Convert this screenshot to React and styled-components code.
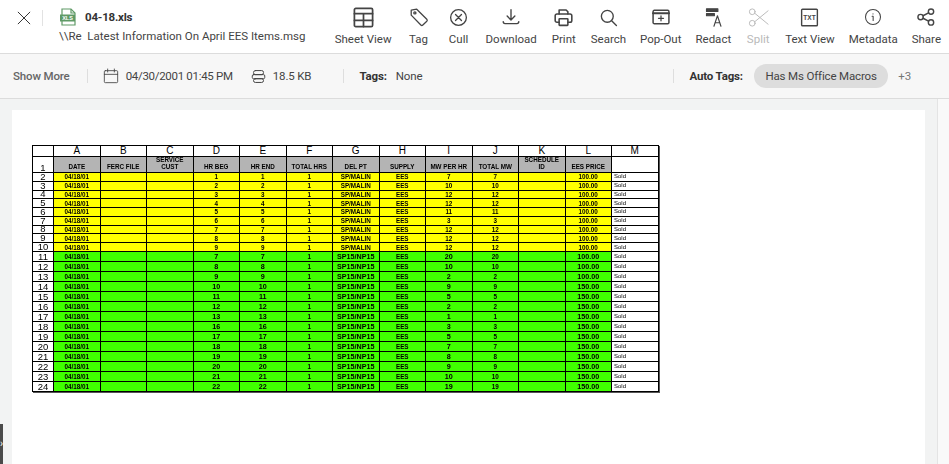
import React from 'react';
import styled, { createGlobalStyle } from 'styled-components';

const GlobalStyle = createGlobalStyle`
  html, body { margin: 0; padding: 0; height: 100%; overflow: hidden; }
  body { font-family: Roboto, "Liberation Sans", sans-serif; color: #333; background: #fff; }
`;

const LETTERS = ['A', 'B', 'C', 'D', 'E', 'F', 'G', 'H', 'I', 'J', 'K', 'L', 'M'];
const HEADINGS = ['DATE', 'FERC FILE', 'SERVICE CUST', 'HR BEG', 'HR END', 'TOTAL HRS', 'DEL PT', 'SUPPLY', 'MW PER HR', 'TOTAL MW', 'SCHEDULE ID', 'EES PRICE', ''];

const yellowMw = [7, 10, 12, 12, 11, 3, 12, 12, 12];
const greenHours = [7, 8, 9, 10, 11, 12, 13, 16, 17, 18, 19, 20, 21, 22];
const greenMw = [20, 10, 2, 9, 5, 2, 1, 3, 5, 7, 8, 9, 10, 19];

const rows = [
  ...yellowMw.map((mw, i) => ({ fill: 'yellow', hour: i + 1, point: 'SP/MALIN', mw, price: '100.00' })),
  ...greenMw.map((mw, i) => ({ fill: 'green', hour: greenHours[i], point: 'SP15/NP15', mw, price: i < 3 ? '100.00' : '150.00' })),
];

const Icon = styled.svg.attrs({ viewBox: '0 0 24 24', fill: 'none', stroke: 'currentColor' })`
  width: ${(p) => p.$size || 24}px;
  height: ${(p) => p.$size || 24}px;
  stroke-width: ${(p) => p.$weight || 1.5};
  stroke-linecap: round;
  stroke-linejoin: round;
  display: block;
`;

const TxtText = styled.text`
  font-family: "Liberation Sans", sans-serif;
  font-size: 7.5px;
  font-weight: 700;
  fill: currentColor;
  stroke: none;
`;

const tools = [
  { label: 'Sheet View', icon: (
    <Icon $size={23} $weight={1.8}><rect x="2.5" y="2.5" width="19" height="19" rx="1.5" /><path d="M2.5 8h19M2.5 15h19M12 8v13.5" /></Icon>
  ) },
  { label: 'Tag', icon: (
    <Icon $size={22} $weight={1.4}><path d="M3.5 4.5 9.5 3.5 20.5 14.5a1.6 1.6 0 0 1 0 2.2l-4.3 4.1a1.6 1.6 0 0 1-2.2 0L3.5 10z" /><circle cx="7.5" cy="7.5" r="1.2" /></Icon>
  ) },
  { label: 'Cull', icon: (
    <Icon $size={21} $weight={1.5}><circle cx="12" cy="12" r="9" /><path d="m8.6 8.6 6.8 6.8M15.4 8.6l-6.8 6.8" /></Icon>
  ) },
  { label: 'Download', icon: (
    <Icon $size={22} $weight={1.5}><path d="M12 4v11M7.8 11l4.2 4.2 4.2-4.2M3.5 17c0 1.6.8 2.2 2 2.2h13c1.2 0 2-.6 2-2.2" /></Icon>
  ) },
  { label: 'Print', icon: (
    <Icon $size={21} $weight={1.8}><path d="M7 8V3.5h8l2 2V8" /><path d="M7 17.5H4.5A2 2 0 0 1 2.5 15.5V10a2 2 0 0 1 2-2h15a2 2 0 0 1 2 2v5.5a2 2 0 0 1-2 2H17" /><rect x="7" y="13.5" width="10" height="7.5" rx=".6" /></Icon>
  ) },
  { label: 'Search', icon: (
    <Icon $size={19} $weight={1.7}><circle cx="10.5" cy="10.5" r="7.5" /><path d="m16 16 6 6" /></Icon>
  ) },
  { label: 'Pop-Out', icon: (
    <Icon $size={20}><rect x="2.5" y="4" width="19" height="16" rx="1.5" strokeWidth="1.8" /><path d="M2.5 7.5h19" strokeWidth="2.6" /><path d="M12 10.5v6M9 13.5h6" /></Icon>
  ) },
  { label: 'Redact', icon: (
    <Icon $size={21} $weight={1.3}>
      <path d="M4 2h13v3H4zM4 7.5h9V10H4z" fill="currentColor" />
      <path d="M12.5 22 16.5 10 20.5 22M13.8 18h5.400" />
    </Icon>
  ) },
  { label: 'Split', disabled: true, icon: (
    <Icon $size={23} $weight={1}><circle cx="5.5" cy="6" r="3" /><circle cx="5.5" cy="18" r="3" /><path d="M8 7.5 22 19M8 16.5 22 5" /></Icon>
  ) },
  { label: 'Text View', icon: (
    <Icon $size={21}>
      <rect x="3" y="2.5" width="18" height="19" rx="1" strokeWidth="1.6" />
      <TxtText x="12" y="15" textAnchor="middle">TXT</TxtText>
    </Icon>
  ) },
  { label: 'Metadata', icon: (
    <Icon $size={18} $weight={1.4}><circle cx="12" cy="12" r="10" /><path d="M10.8 11h1.4v5.5M12 7.6v.4" /></Icon>
  ) },
  { label: 'Share', icon: (
    <Icon $size={20} $weight={1.7}><circle cx="18" cy="5.5" r="3.2" /><circle cx="5.5" cy="12" r="3.2" /><circle cx="18" cy="18.5" r="3.2" /><path d="m8.4 10.5 6.7-3.5M8.4 13.5l6.7 3.5" /></Icon>
  ) },
];

const App = () => (
  <Page>
    <GlobalStyle />
    <TopBar>
      <CloseButton aria-label="Close">
        <Icon $size={14} $weight={1.7}><path d="M2 2 22 22M22 2 2 22" /></Icon>
      </CloseButton>
      <TopDivider />
      <FileInfo>
        <FileTitle>
          <XlsIcon viewBox="0 0 18 18" aria-hidden="true">
            <path d="M3 1h9l4 4v12H3z" fill="none" stroke="#5f9a66" strokeWidth="1.2" />
            <path d="M12 1v4h4" fill="none" stroke="#5f9a66" strokeWidth="1.2" />
            <rect x="1" y="6.5" width="15" height="7" fill="#5f9a66" />
            <XlsText x="8.5" y="12.2" textAnchor="middle">XLS</XlsText>
          </XlsIcon>
          <FileName>04-18.xls</FileName>
        </FileTitle>
        <FilePath>{'\\\\Re\u00a0\u00a0Latest Information On April EES Items.msg'}</FilePath>
      </FileInfo>
      <Toolbar>
        {tools.map((tool) => (
          <Tool key={tool.label} $disabled={tool.disabled}>
            <ToolIcon>{tool.icon}</ToolIcon>
            <span>{tool.label}</span>
          </Tool>
        ))}
      </Toolbar>
    </TopBar>

    <InfoBar>
      <ShowMore>Show More</ShowMore>
      <InfoDivider />
      <InfoItem $tight>
        <Icon $size={16} $weight={1.3}><rect x="2" y="4" width="20" height="18" rx="1.5" /><path d="M2 9.5h20M7 1.5v4.5M17 1.5v4.5" /></Icon>
        04/30/2001 01:45 PM
      </InfoItem>
      <InfoItem $gapLeft={18}>
        <Icon $size={15} $weight={1.6}><rect x="4" y="2.5" width="16" height="6.5" rx="3" /><rect x="2" y="9" width="20" height="6.5" rx="2" /><rect x="4" y="15.5" width="16" height="6" rx="3" /></Icon>
        18.5 KB
      </InfoItem>
      <InfoDivider $left={32} />
      <TagGroup>
        <Strong>Tags:</Strong>
        None
      </TagGroup>
      <AutoTags>
        <InfoDivider />
        <Strong>Auto Tags:</Strong>
        <Chip>Has Ms Office Macros</Chip>
        <More>+3</More>
      </AutoTags>
    </InfoBar>

    <Viewer>
      <Stage>
        <Document>
          <Sheet>
            <Corner />
            {LETTERS.map((letter) => <Letter key={letter}>{letter}</Letter>)}
            <RowNumber>1</RowNumber>
            {HEADINGS.map((heading, i) => (
              <Heading key={i} $blank={!heading}>{heading}</Heading>
            ))}
            {rows.map((row, i) => (
              <React.Fragment key={i}>
                <RowNumber>{i + 2}</RowNumber>
                <Cell $fill={row.fill}>04/18/01</Cell>
                <Cell $fill={row.fill} />
                <Cell $fill={row.fill} />
                <Cell $fill={row.fill} $big={row.fill === 'green'}>{row.hour}</Cell>
                <Cell $fill={row.fill} $big={row.fill === 'green'}>{row.hour}</Cell>
                <Cell $fill={row.fill}>1</Cell>
                <Cell $fill={row.fill} $big={row.fill === 'green'}>{row.point}</Cell>
                <Cell $fill={row.fill}>EES</Cell>
                <Cell $fill={row.fill} $big={row.fill === 'green'}>{row.mw}</Cell>
                <Cell $fill={row.fill}>{row.mw}</Cell>
                <Cell $fill={row.fill} />
                <Cell $fill={row.fill} $big={row.fill === 'green'}>{row.price}</Cell>
                <SoldCell>Sold</SoldCell>
              </React.Fragment>
            ))}
          </Sheet>
        </Document>
      </Stage>
      <Rail />
      <SideTab>›</SideTab>
    </Viewer>
  </Page>
);

const Page = styled.div`
  height: 100vh;
  display: flex;
  flex-direction: column;
  overflow: hidden;
`;

const TopBar = styled.header`
  height: 54px;
  box-sizing: border-box;
  flex: none;
  display: flex;
  align-items: flex-start;
  background: #fff;
  border-bottom: 1px solid #dcdcdc;
`;

const CloseButton = styled.button`
  margin: 11px 0 0 17px;
  padding: 0;
  border: 0;
  background: none;
  color: #333;
  display: flex;
`;

const TopDivider = styled.div`
  width: 1px;
  height: 16px;
  margin: 10px 0 0 11px;
  background: #e2e2e2;
`;

const FileInfo = styled.div`
  width: 262px;
  margin: 8px 0 0 16px;
  flex: none;
`;

const FileTitle = styled.div`
  display: flex;
  align-items: center;
  gap: 8px;
  height: 18px;
`;

const XlsIcon = styled.svg`
  width: 18px;
  height: 18px;
  flex: none;
`;

const XlsText = styled.text`
  font-family: "Liberation Sans", sans-serif;
  font-size: 5.5px;
  font-weight: 700;
  fill: #fff;
`;

const FileName = styled.span`
  font-size: 11.5px;
  font-weight: 700;
  letter-spacing: -0.2px;
  color: #333;
`;

const FilePath = styled.div`
  margin-top: 2px;
  font-size: 11.5px;
  line-height: 16px;
  color: #444;
  white-space: nowrap;
`;

const Toolbar = styled.nav`
  margin-left: auto;
  padding: 4px 8px 0 0;
  display: flex;
  gap: 14px;
`;

const Tool = styled.div`
  min-width: 26px;
  display: flex;
  flex-direction: column;
  align-items: center;
  font-size: 11.5px;
  line-height: 16px;
  white-space: nowrap;
  color: ${(p) => (p.$disabled ? '#b9b9b9' : '#444')};
`;

const ToolIcon = styled.div`
  height: 26px;
  margin-bottom: 1px;
  display: flex;
  align-items: center;
  justify-content: center;
`;

const InfoBar = styled.section`
  height: 45px;
  box-sizing: border-box;
  flex: none;
  display: flex;
  align-items: center;
  padding-left: 13px;
  background: #f7f7f7;
  border-bottom: 1px solid #dcdcdc;
  font-size: 11.5px;
  letter-spacing: -0.15px;
  color: #444;
`;

const ShowMore = styled.span`
  font-weight: 500;
  color: #666;
`;

const InfoDivider = styled.div`
  width: 1px;
  height: 14px;
  margin: 0 15px 0 ${(p) => p.$left || 17}px;
  background: #dedede;
`;

const InfoItem = styled.div`
  display: flex;
  align-items: center;
  gap: 7px;
  margin-left: ${(p) => p.$gapLeft || 0}px;
  letter-spacing: ${(p) => (p.$tight ? '-0.3px' : 'inherit')};
  white-space: nowrap;
`;

const TagGroup = styled.div`
  display: flex;
  gap: 9px;
`;

const Strong = styled.strong`
  font-weight: 700;
  color: #333;
`;

const AutoTags = styled.div`
  margin-left: auto;
  display: flex;
  align-items: center;
  padding-right: 38px;
`;

const Chip = styled.div`
  height: 24px;
  margin-left: 11px;
  padding: 0 11.5px;
  display: flex;
  align-items: center;
  border-radius: 12px;
  background: #dddddd;
  color: #444;
`;

const More = styled.span`
  margin-left: 10px;
  color: #777;
`;

const Viewer = styled.main`
  flex: 1;
  min-height: 0;
  position: relative;
  display: flex;
  background: #f2f3f3;
`;

const Stage = styled.div`
  flex: 1;
  padding: 11px 12px 0;
  overflow: hidden;
`;

const Rail = styled.div`
  width: 11px;
  flex: none;
  background: #f9f9f9;
  border-left: 1px solid #e4e4e4;
`;

const SideTab = styled.div`
  position: absolute;
  left: 0;
  bottom: 0;
  width: 3px;
  height: 40px;
  overflow: hidden;
  background: #4a4a4a;
  color: #fff;
  font-size: 10px;
  line-height: 40px;
`;

const Document = styled.div`
  height: 100%;
  box-sizing: border-box;
  padding: 35px 20px 0;
  background: #fff;
`;

const Sheet = styled.div`
  width: fit-content;
  display: grid;
  grid-template-columns: 21px repeat(13, 46.5px);
  grid-template-rows: 11px 16px repeat(9, 8.78px) repeat(14, 10px);
  border-top: 1px solid #000;
  border-left: 1px solid #000;
  box-shadow: 1px 1px 0 #555;
  font-family: "Liberation Sans", Arial, sans-serif;
  color: #000;
  filter: blur(0.3px);
`;

const GridCell = styled.div`
  box-sizing: border-box;
  min-width: 0;
  overflow: hidden;
  border-right: 1px solid #000;
  border-bottom: 1px solid #000;
  display: flex;
  align-items: center;
  justify-content: center;
  text-align: center;
`;

const Corner = styled(GridCell)`
  background: #fff;
`;

const Letter = styled(GridCell)`
  background: #fff;
  font-size: 10px;
  line-height: 10px;
`;

const RowNumber = styled(GridCell)`
  background: #fff;
  font-size: 9.5px;
  line-height: 8px;
  align-items: flex-end;
`;

const Heading = styled(GridCell)`
  align-items: flex-end;
  padding: 0 3px 2px;
  background: ${(p) => (p.$blank ? '#fff' : '#b4b4b4')};
  font-size: 6.3px;
  line-height: 7px;
  font-weight: 700;
`;

const Cell = styled(GridCell)`
  background: ${(p) => (p.$fill === 'yellow' ? '#ffff00' : '#40ff00')};
  font-size: ${(p) => (p.$big ? 7.2 : 6.3)}px;
  line-height: 7px;
  font-weight: 700;
`;

const SoldCell = styled(GridCell)`
  justify-content: flex-start;
  padding-left: 2px;
  background: #fff;
  font-size: 6px;
  line-height: 7px;
`;

export default App;
